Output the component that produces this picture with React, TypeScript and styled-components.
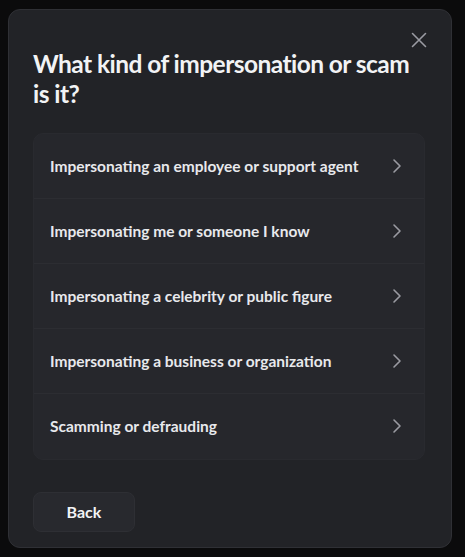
import React from "react";
import styled, { createGlobalStyle } from "styled-components";

const Global = createGlobalStyle`
  html, body { margin: 0; padding: 0; background: #0b0b0c; }
  body { font-family: Lato, "Noto Sans", sans-serif; -webkit-font-smoothing: antialiased; }
  * { box-sizing: border-box; }
`;

const Page = styled.div`
  width: 465px;
  height: 557px;
  padding: 9px 13px 9px 8px;
  display: flex;
`;

const Modal = styled.div`
  position: relative;
  flex: 1;
  background: #222327;
  border: 1px solid #2f3035;
  border-radius: 12px;
  padding: 39px 26px 16px 24px;
  display: flex;
  flex-direction: column;
`;

const Close = styled.button`
  position: absolute;
  top: 19px;
  right: 21px;
  width: 22px;
  height: 22px;
  padding: 0;
  border: none;
  background: transparent;
  color: #9a9ba2;
  display: flex;
  align-items: center;
  justify-content: center;
`;

const Title = styled.h1`
  margin: 0 0 24px;
  font-size: 24.5px;
  line-height: 30px;
  font-weight: 700;
  letter-spacing: -0.55px;
  color: #f2f3f5;
`;

const List = styled.div`
  background: #26272c;
  border: 1px solid #292a2f;
  border-radius: 10px;
  display: flex;
  flex-direction: column;
`;

const Row = styled.div<{ $last?: boolean }>`
  height: 65px;
  display: flex;
  align-items: center;
  justify-content: space-between;
  padding: 0 22px 1px 16px;
  border-bottom: ${(p) => (p.$last ? "none" : "1px solid #2c2d32")};
  font-size: 15.5px;
  font-weight: 700;
  color: #e8e9ec;
`;

const Chevron = styled.span`
  color: #9a9ba2;
  display: flex;
`;

const Footer = styled.div`
  margin-top: 32px;
  display: flex;
`;

const BackButton = styled.button`
  width: 102px;
  height: 40px;
  border-radius: 8px;
  border: 1px solid #2e2f34;
  background: #28292e;
  color: #f2f3f5;
  font-family: inherit;
  font-size: 16px;
  font-weight: 700;
  padding-bottom: 2px;
`;

const items = [
  "Impersonating an employee or support agent",
  "Impersonating me or someone I know",
  "Impersonating a celebrity or public figure",
  "Impersonating a business or organization",
  "Scamming or defrauding",
];

export default function App() {
  return (
    <>
      <Global />
      <Page>
        <Modal>
          <Close aria-label="Close">
            <svg width="16" height="16" viewBox="0 0 16 16" fill="none">
              <path d="M1.5 1.5L14.5 14.5M14.5 1.5L1.5 14.5" stroke="currentColor" strokeWidth="1.6" strokeLinecap="round" />
            </svg>
          </Close>
          <Title>What kind of impersonation or scam is it?</Title>
          <List>
            {items.map((t, i) => (
              <Row key={t} $last={i === items.length - 1}>
                <span>{t}</span>
                <Chevron>
                  <svg width="10" height="16" viewBox="0 0 10 16" fill="none">
                    <path d="M2 2L8 8L2 14" stroke="currentColor" strokeWidth="1.6" strokeLinecap="round" strokeLinejoin="round" />
                  </svg>
                </Chevron>
              </Row>
            ))}
          </List>
          <Footer>
            <BackButton>Back</BackButton>
          </Footer>
        </Modal>
      </Page>
    </>
  );
}
